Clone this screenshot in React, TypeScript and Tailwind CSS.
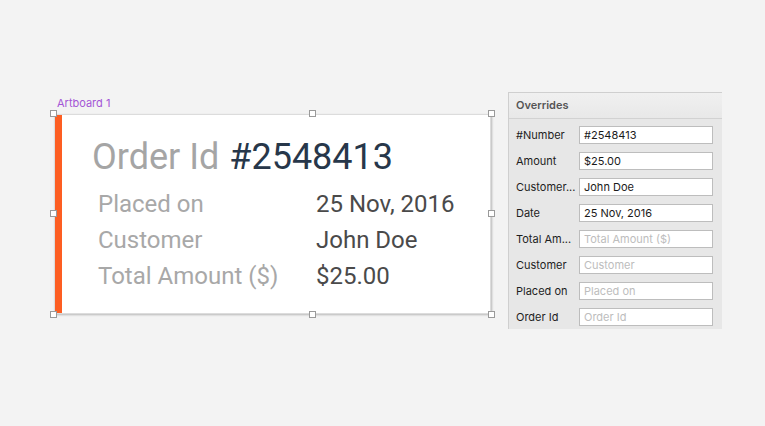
import React from "react";

const Handle = ({ cls }: { cls: string }) => (
  <div className={`absolute w-[7px] h-[7px] bg-white border border-[#9a9a9a] ${cls}`} />
);

const rows: { label: string; value: string; placeholder?: boolean }[] = [
  { label: "#Number", value: "#2548413" },
  { label: "Amount", value: "$25.00" },
  { label: "Customer...", value: "John Doe" },
  { label: "Date", value: "25 Nov, 2016" },
  { label: "Total Am...", value: "Total Amount ($)", placeholder: true },
  { label: "Customer", value: "Customer", placeholder: true },
  { label: "Placed on", value: "Placed on", placeholder: true },
  { label: "Order Id", value: "Order Id", placeholder: true },
];

const cardRows = [
  ["Placed on", "25 Nov, 2016"],
  ["Customer", "John Doe"],
  ["Total Amount ($)", "$25.00"],
];

export default function App() {
  return (
    <div className="w-[765px] h-[426px] bg-[#f3f3f3] overflow-hidden flex items-start">
      <div className="ml-[54px] mt-[97px] flex flex-col">
        <div className="h-[17px] pl-[3px] text-[11px] leading-[13px] text-[#a456d6] font-['Inter',sans-serif]">
          Artboard 1
        </div>
        <div className="relative w-[437px] h-[200px] bg-white border border-[#dcdcdc] shadow-[1px_1px_2px_rgba(0,0,0,0.25)] flex">
          <div className="w-[7px] bg-[#fd5e22] shrink-0" />
          <div className="flex flex-col pl-[30px] pt-[22px] font-['Roboto',sans-serif]">
            <div className="flex items-baseline gap-[10px] text-[36px] leading-[41px]">
              <span className="text-[#a5a5a5]">Order Id</span>
              <span className="text-[#27374a]">#2548413</span>
            </div>
            <div className="flex flex-col pl-[6px] pt-[8px] text-[24px] leading-[36px]">
              {cardRows.map(([l, v]) => (
                <div key={l} className="flex">
                  <span className="w-[218px] text-[#a8a8a8]">{l}</span>
                  <span className="text-[#4a4a4a]">{v}</span>
                </div>
              ))}
            </div>
          </div>
          <Handle cls="-left-[5px] -top-[5px]" />
          <Handle cls="left-[254px] -top-[5px]" />
          <Handle cls="-right-[5px] -top-[5px]" />
          <Handle cls="-left-[5px] top-[95px]" />
          <Handle cls="-right-[5px] top-[95px]" />
          <Handle cls="-left-[5px] -bottom-[5px]" />
          <Handle cls="left-[254px] -bottom-[5px]" />
          <Handle cls="-right-[5px] -bottom-[5px]" />
        </div>
      </div>

      <div className="ml-[17px] mt-[92px] w-[214px] h-[237px] bg-[#e7e7e7] border-l border-t border-[#cfcfcf] flex flex-col font-['Inter',sans-serif]">
        <div className="h-[26px] bg-gradient-to-b from-[#f0f0f0] to-[#e8e8e8] border-b border-[#d2d2d2] flex items-center pl-[7px] text-[11px] font-semibold text-[#555]">
          Overrides
        </div>
        <div className="flex flex-col gap-[8px] pt-[7px] pl-[7px]">
          {rows.map((r) => (
            <div key={r.label + r.value} className="flex items-center h-[18px]">
              <span className="w-[63px] text-[11px] text-[#1e1e1e] whitespace-nowrap">{r.label}</span>
              <div className="w-[134px] h-[18px] bg-white border border-[#bdbdbd] flex items-center pl-[4px] text-[11px]">
                <span className={r.placeholder ? "text-[#bdbdbd]" : "text-[#1a1a1a]"}>{r.value}</span>
              </div>
            </div>
          ))}
        </div>
      </div>
    </div>
  );
}
